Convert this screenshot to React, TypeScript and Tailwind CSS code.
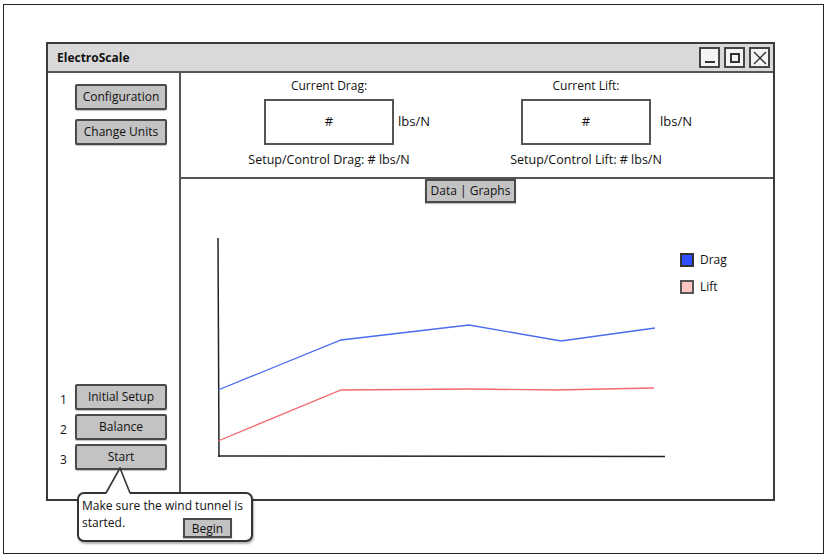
import React from 'react';

const font = "font-['Comic_Sans_MS','Open_Sans',sans-serif]";

function GrayButton({ label, className = '' }: { label: string; className?: string }) {
  return (
    <div
      className={`flex items-center justify-center bg-[#c3c3c3] border-2 border-[#4a4a4a] rounded-[2px] text-[12px] text-[#111] shadow-[0_1px_1px_rgba(0,0,0,0.25)] ${className}`}
    >
      {label}
    </div>
  );
}

function WinButton({ children }: { children: React.ReactNode }) {
  return (
    <div className="w-[21px] h-[21px] border-2 border-[#444] bg-[#f4f4f4] flex items-center justify-center">
      {children}
    </div>
  );
}

function Readout({ title, setup, gap }: { title: string; setup: string; gap: string }) {
  return (
    <div className="flex flex-col items-center w-[130px] shrink-0">
      <div className="h-[18px] leading-[18px] text-[12px]">{title}</div>
      <div className="flex items-center w-[130px] mt-[4px]">
        <div className="w-[130px] h-[46px] shrink-0 border-2 border-[#555] bg-white flex items-center justify-center text-[13px]">
          #
        </div>
        <span className={`${gap} whitespace-nowrap text-[13px]`}>lbs/N</span>
      </div>
      <div className="mt-[6px] h-[18px] leading-[18px] text-[12.5px] whitespace-nowrap">{setup}</div>
    </div>
  );
}

function Chart() {
  return (
    <svg width="458" height="230" viewBox="0 0 458 230" className="shrink-0">
      <line x1="6" y1="6" x2="7" y2="225" stroke="#222" strokeWidth="1.5" />
      <line x1="6" y1="224" x2="453" y2="224.5" stroke="#222" strokeWidth="1.5" />
      <polyline
        points="6,158 129,108 257,93 349,109 443,96"
        fill="none"
        stroke="#4a6cf0"
        strokeWidth="1.3"
      />
      <polyline
        points="6,209 129,158 257,157 343,158 442,156"
        fill="none"
        stroke="#f46a72"
        strokeWidth="1.3"
      />
    </svg>
  );
}

export default function App() {
  return (
    <div className={`relative w-[829px] h-[560px] bg-white text-[#111] ${font}`}>
      <div className="absolute left-0 top-0 w-[829px] h-[560px] pl-[3px] pt-[4px]">
        <div className="w-[821px] h-[550px] border border-[#222] pl-[42px] pt-[37px]">
          {/* window */}
          <div className="w-[729px] h-[459px] border-2 border-[#3a3a3a] flex flex-col bg-white">
            <div className="h-[29px] bg-[#d9d9d9] border-b-2 border-[#555] flex items-center pl-[9px] pr-[3px]">
              <span className="font-bold text-[12px] flex-1">ElectroScale</span>
              <div className="flex gap-[4px]">
                <WinButton>
                  <div className="w-[10px] h-[2px] bg-[#333] mt-[9px]" />
                </WinButton>
                <WinButton>
                  <div className="w-[10px] h-[10px] border-2 border-[#333]" />
                </WinButton>
                <WinButton>
                  <svg width="14" height="14" viewBox="0 0 14 14">
                    <path d="M1 1 L13 13 M13 1 L1 13" stroke="#333" strokeWidth="1.4" />
                  </svg>
                </WinButton>
              </div>
            </div>
            <div className="flex flex-1 min-h-0">
              {/* sidebar */}
              <div className="w-[133px] shrink-0 border-r-2 border-[#555] flex flex-col pl-[12px] pt-[11px] pb-[29px]">
                <div className="flex flex-col gap-[9px] pl-[15px]">
                  <GrayButton label="Configuration" className="w-[92px] h-[26px]" />
                  <GrayButton label="Change Units" className="w-[92px] h-[26px]" />
                </div>
                <div className="flex-1" />
                <div className="flex flex-col gap-[4px]">
                  {[
                    ['1', 'Initial Setup'],
                    ['2', 'Balance'],
                    ['3', 'Start'],
                  ].map(([n, l]) => (
                    <div key={n} className="flex items-center">
                      <span className="w-[15px] text-[12px] pt-[5px]">{n}</span>
                      <GrayButton label={l} className="w-[92px] h-[26px]" />
                    </div>
                  ))}
                </div>
              </div>
              {/* main */}
              <div className="flex-1 flex flex-col min-w-0">
                <div className="h-[106px] shrink-0 border-b-2 border-[#555] flex pl-[83px] pt-[4px] gap-[127px]">
                  <Readout title="Current Drag:" setup="Setup/Control Drag: # lbs/N" gap="ml-[4px]" />
                  <Readout title="Current Lift:" setup="Setup/Control Lift: # lbs/N" gap="ml-[9px]" />
                </div>
                <div className="flex-1 flex flex-col">
                  <div className="pl-[244px]">
                    <GrayButton label="Data | Graphs" className="w-[91px] h-[24px] rounded-none" />
                  </div>
                  <div className="flex pl-[31px] pt-[29px]">
                    <Chart />
                    <div className="ml-[10px] mt-[19px] flex flex-col gap-[9px] text-[12px]">
                      <div className="flex items-center gap-[6px]">
                        <div className="w-[14px] h-[14px] bg-[#2f4fff] border-2 border-[#333]" />
                        <span>Drag</span>
                      </div>
                      <div className="flex items-center gap-[6px]">
                        <div className="w-[14px] h-[14px] bg-[#ffc4c4] border-2 border-[#555]" />
                        <span>Lift</span>
                      </div>
                    </div>
                  </div>
                </div>
              </div>
            </div>
          </div>
        </div>
      </div>

      {/* tooltip callout */}
      <div className="absolute left-[77px] top-[492px] w-[176px] h-[50px] bg-white border-2 border-[#333] rounded-[7px] shadow-[1px_2px_2px_rgba(0,0,0,0.3)] pl-[3px] pt-[3px] text-[12px] leading-[17px]">
        <div>Make sure the wind tunnel is</div>
        <div className="flex items-start">
          <span className="flex-1">started.</span>
          <GrayButton label="Begin" className="w-[49px] h-[20px] mr-[19px] mt-[4px] rounded-none" />
        </div>
      </div>
      <svg className="absolute left-[104px] top-[467px]" width="28" height="28" viewBox="0 0 28 28">
        <polygon points="2,27 16,1 26,27" fill="white" />
        <polyline points="2,26 16,1 26,26" fill="none" stroke="#333" strokeWidth="1.6" />
      </svg>
    </div>
  );
}
